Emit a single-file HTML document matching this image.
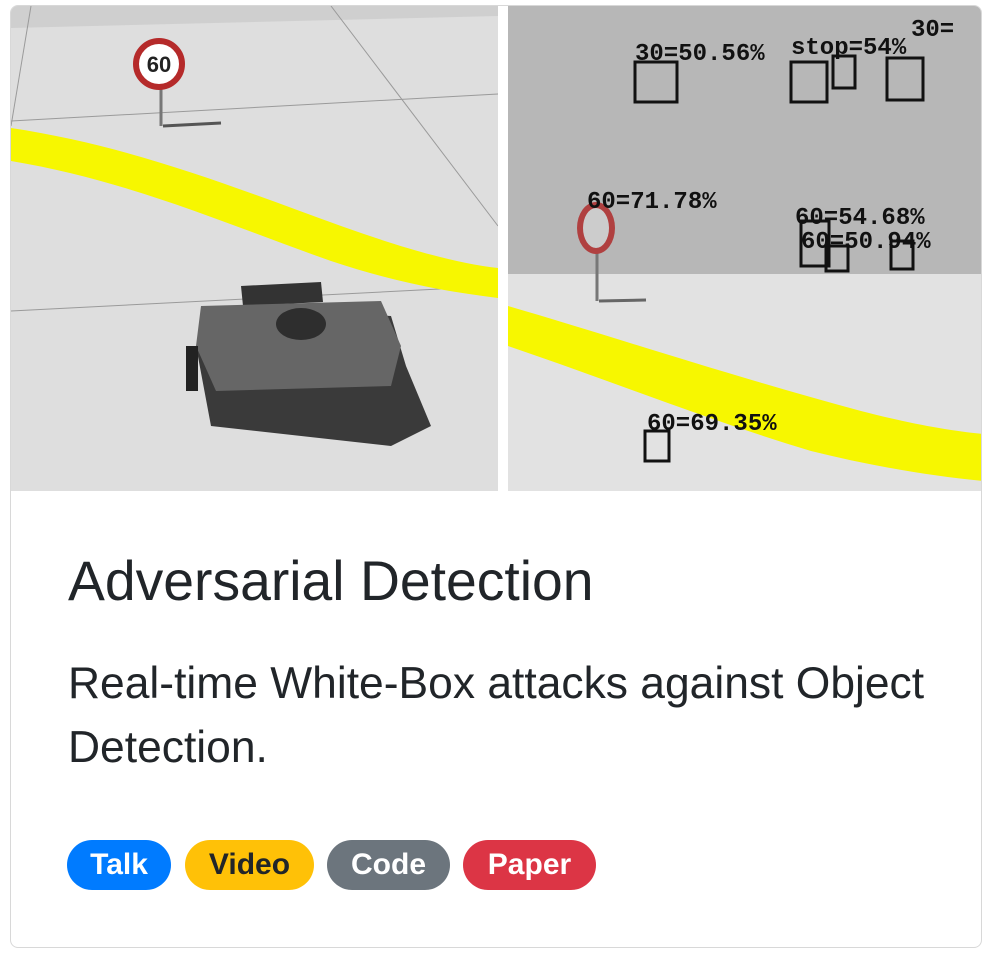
<!DOCTYPE html>
<html><head><meta charset="utf-8"><style>
html,body{margin:0;padding:0;background:#fff;width:990px;height:960px;overflow:hidden}
.card{position:absolute;left:10px;top:5px;width:972px;height:943px;border:1px solid #d8d8d8;border-radius:8px;overflow:hidden;background:#fff;box-sizing:border-box}
.imgs{position:absolute;left:0;top:0;width:972px;height:485px}
h1{position:absolute;left:57px;top:543px;margin:0;font:400 55.3px "Liberation Sans",sans-serif;color:#212529;white-space:nowrap}
p{position:absolute;left:57px;top:646px;margin:0;width:910px;font:400 44.4px/64px "Liberation Sans",sans-serif;color:#212529}
.b{position:absolute;top:834px;height:50px;border-radius:25px;font:700 30px/50px "Liberation Sans",sans-serif;color:#fff;text-align:center}
</style></head><body>
<div class="card">
<svg class="imgs" width="972" height="485" viewBox="0 0 972 485">
<rect x="0" y="0" width="487" height="485" fill="#dedede"/>
<path d="M0 0 L487 0 L487 10 L0 22Z" fill="#cfcfcf"/>
<line x1="0" y1="115" x2="487" y2="88" stroke="#9a9a9a" stroke-width="1"/>
<line x1="0" y1="305" x2="487" y2="280" stroke="#9a9a9a" stroke-width="1"/>
<line x1="20" y1="0" x2="0" y2="120" stroke="#9a9a9a"/>
<line x1="320" y1="0" x2="487" y2="220" stroke="#9a9a9a"/>
<path d="M0 122 C120 140 220 180 330 220 C400 245 450 258 487 262 L487 292 C430 285 380 275 320 255 C220 220 120 175 0 155Z" fill="#f7f700"/>
<line x1="150" y1="75" x2="150" y2="120" stroke="#777" stroke-width="3"/>
<path d="M152 120 L210 117" stroke="#555" stroke-width="3"/>
<circle cx="148" cy="58" r="23" fill="#fff" stroke="#b52a2a" stroke-width="6"/>
<text x="148" y="66" font-family="Liberation Sans,sans-serif" font-size="22" font-weight="700" text-anchor="middle" fill="#222">60</text>
<path d="M230 280 L310 276 L312 296 L232 300Z" fill="#333"/>
<path d="M200 420 L380 440 L420 420 L395 360 L380 310 L200 300 L185 340Z" fill="#3a3a3a"/>
<path d="M190 300 L370 295 L390 340 L380 380 L205 385 L185 340Z" fill="#666"/>
<ellipse cx="290" cy="318" rx="25" ry="16" fill="#2e2e2e"/>
<rect x="175" y="340" width="12" height="45" fill="#222"/>
<rect x="497" y="0" width="475" height="485" fill="#e2e2e2"/>
<rect x="497" y="0" width="475" height="268" fill="#b7b7b7"/>
<path d="M497 300 C600 330 720 370 850 405 C900 418 940 425 972 428 L972 475 C920 470 860 460 800 445 C700 415 600 375 497 340Z" fill="#f7f700"/>
<line x1="586" y1="240" x2="586" y2="295" stroke="#777" stroke-width="3"/>
<path d="M588 295 L635 294" stroke="#666" stroke-width="3"/>
<ellipse cx="585" cy="222" rx="19" ry="26" fill="#b04040"/>
<ellipse cx="585" cy="222" rx="13" ry="20" fill="#ccc"/>
<g fill="none" stroke="#111" stroke-width="3">
<rect x="624" y="56" width="42" height="40"/><rect x="780" y="56" width="36" height="40"/><rect x="822" y="50" width="22" height="32"/><rect x="876" y="52" width="36" height="42"/>
<rect x="790" y="215" width="28" height="45"/><rect x="815" y="240" width="22" height="25"/><rect x="880" y="235" width="22" height="28"/>
<rect x="634" y="425" width="24" height="30"/>
</g>
<g font-family="Liberation Mono,monospace" font-weight="700" fill="#111" font-size="24">
<text x="624" y="54">30=50.56%</text><text x="780" y="48">stop=54%</text><text x="900" y="30">30=</text>
<text x="576" y="202">60=71.78%</text><text x="784" y="218">60=54.68%</text><text x="790" y="242">60=50.94%</text>
<text x="636" y="424">60=69.35%</text>
</g>
<rect x="487" y="0" width="10" height="485" fill="#fff"/>
</svg>
<h1>Adversarial Detection</h1>
<p>Real-time White-Box attacks against Object Detection.</p>
<div class="b" style="left:56px;width:104px;background:#007bff">Talk</div>
<div class="b" style="left:174px;width:129px;background:#ffc107;color:#212529">Video</div>
<div class="b" style="left:316px;width:123px;background:#6c757d">Code</div>
<div class="b" style="left:452px;width:133px;background:#dc3545">Paper</div>
</div>
</body></html>
